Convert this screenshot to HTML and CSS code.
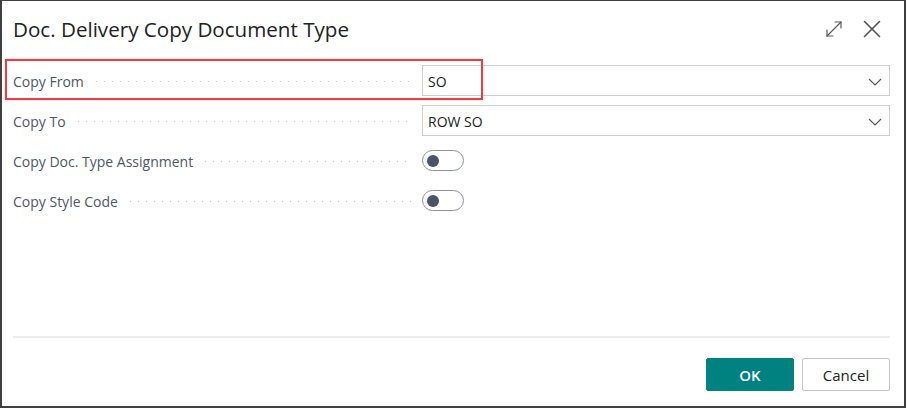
FILE: index.html
```html
<!DOCTYPE html>
<html lang="en">
<head>
<meta charset="utf-8">
<title>Doc. Delivery Copy Document Type</title>
<link rel="stylesheet" href="styles.css">
</head>
<body>
<div class="dialog">
  <header class="header">
    <h1 class="title">Doc. Delivery Copy Document Type</h1>
    <div class="header-actions">
      <button class="icon-btn" aria-label="Expand">
        <svg width="18" height="18" viewBox="0 0 18 18" fill="none" stroke="#5a5a5a" stroke-width="1.2" stroke-linecap="round" stroke-linejoin="round">
          <path d="M2 16 L16 2"/>
          <path d="M10 2 L16 2 L16 8"/>
          <path d="M2 10 L2 16 L8 16"/>
        </svg>
      </button>
      <button class="icon-btn" aria-label="Close">
        <svg width="18" height="18" viewBox="0 0 18 18" fill="none" stroke="#505050" stroke-width="1.6" stroke-linecap="round">
          <path d="M1.5 1.5 L16.5 16.5"/>
          <path d="M16.5 1.5 L1.5 16.5"/>
        </svg>
      </button>
    </div>
  </header>

  <main class="content">
    <div class="row highlighted">
      <div class="label-cell"><span class="label">Copy From</span><span class="leader"></span></div>
      <div class="select"><span class="value">SO</span>
        <svg class="chevron" width="14" height="8" viewBox="0 0 14 8" fill="none" stroke="#555" stroke-width="1.1"><path d="M1 1 L7 7 L13 1"/></svg>
      </div>
      <div class="red-box"></div>
    </div>
    <div class="row">
      <div class="label-cell"><span class="label">Copy To</span><span class="leader"></span></div>
      <div class="select"><span class="value">ROW SO</span>
        <svg class="chevron" width="14" height="8" viewBox="0 0 14 8" fill="none" stroke="#555" stroke-width="1.1"><path d="M1 1 L7 7 L13 1"/></svg>
      </div>
    </div>
    <div class="row">
      <div class="label-cell"><span class="label">Copy Doc. Type Assignment</span><span class="leader"></span></div>
      <div class="toggle-cell"><span class="toggle"><span class="knob"></span></span></div>
    </div>
    <div class="row">
      <div class="label-cell"><span class="label">Copy Style Code</span><span class="leader"></span></div>
      <div class="toggle-cell"><span class="toggle"><span class="knob"></span></span></div>
    </div>
  </main>

  <div class="separator"></div>

  <footer class="footer">
    <button class="btn btn-primary">OK</button>
    <button class="btn btn-secondary">Cancel</button>
  </footer>
</div>
</body>
</html>
```

FILE: styles.css
```css
* { box-sizing: border-box; }

html, body {
  margin: 0;
  padding: 0;
  background: #ffffff;
}

body {
  width: 907px;
  height: 408px;
  font-family: "Open Sans", "Noto Sans", "Liberation Sans", sans-serif;
}

.dialog {
  width: 906px;
  height: 408px;
  border-style: solid;
  border-color: #3f3f3f;
  border-width: 1px 2px 2px 2px;
  display: flex;
  flex-direction: column;
  background: #ffffff;
}

.header {
  display: flex;
  align-items: center;
  justify-content: space-between;
  height: 56px;
  padding: 0 23px 0 11px;
}

.title {
  margin: 0;
  font-size: 20.6px;
  font-weight: 500;
  color: #212121;
  line-height: 28px;
}

.header-actions {
  display: flex;
  align-items: center;
  gap: 20px;
}

.icon-btn {
  background: none;
  border: 0;
  padding: 0;
  width: 18px;
  height: 18px;
  display: flex;
}

.content {
  flex: 1;
  display: flex;
  flex-direction: column;
  gap: 9px;
  padding: 8px 14px 0 11px;
}

.row {
  position: relative;
  display: flex;
  align-items: center;
  height: 31px;
}

.label-cell {
  width: 409px;
  display: flex;
  align-items: center;
  padding-right: 11px;
  padding-top: 2px;
}

.label {
  font-size: 14px;
  color: #4d5866;
  white-space: nowrap;
}

.leader {
  flex: 1;
  height: 2px;
  margin-left: 12px;
  background-image: linear-gradient(to right, #c3c3c3 0 1.3px, transparent 1.3px);
  background-size: 8px 1.3px;
  background-repeat: repeat-x;
  background-position: left center;
}

.select {
  flex: 1;
  height: 31px;
  border: 1px solid #cfcfcf;
  display: flex;
  align-items: center;
  justify-content: space-between;
  padding: 2px 7px 0 5px;
}

.value {
  font-size: 14px;
  color: #212121;
}

.chevron {
  display: block;
}

.red-box {
  position: absolute;
  left: -8px;
  top: -6px;
  width: 478px;
  height: 41px;
  border: 2px solid #e84046;
  box-shadow: 0 0 2px rgba(232, 64, 70, 0.35);
  pointer-events: none;
}

.toggle-cell {
  flex: 1;
  display: flex;
  align-items: center;
}

.toggle {
  width: 42px;
  height: 21px;
  border: 1px solid #8c929b;
  border-radius: 11px;
  display: flex;
  align-items: center;
  padding-left: 4px;
}

.knob {
  width: 12px;
  height: 12px;
  border-radius: 50%;
  background: #485468;
}

.separator {
  height: 2px;
  background: #ebebeb;
  margin: 0 14px 0 11px;
}

.footer {
  display: flex;
  justify-content: flex-end;
  gap: 8px;
  padding: 20px 14px 15px 11px;
}

.btn {
  width: 88px;
  height: 33px;
  font-family: "Open Sans", "Noto Sans", "Liberation Sans", sans-serif;
  font-size: 15px;
  border-radius: 2px;
  padding: 0;
}

.btn-primary {
  background: #008281;
  border: 1px solid #008281;
  color: #ffffff;
  font-weight: 600;
}

.btn-secondary {
  background: #ffffff;
  border: 1px solid #c6c6c6;
  color: #212121;
}
```
